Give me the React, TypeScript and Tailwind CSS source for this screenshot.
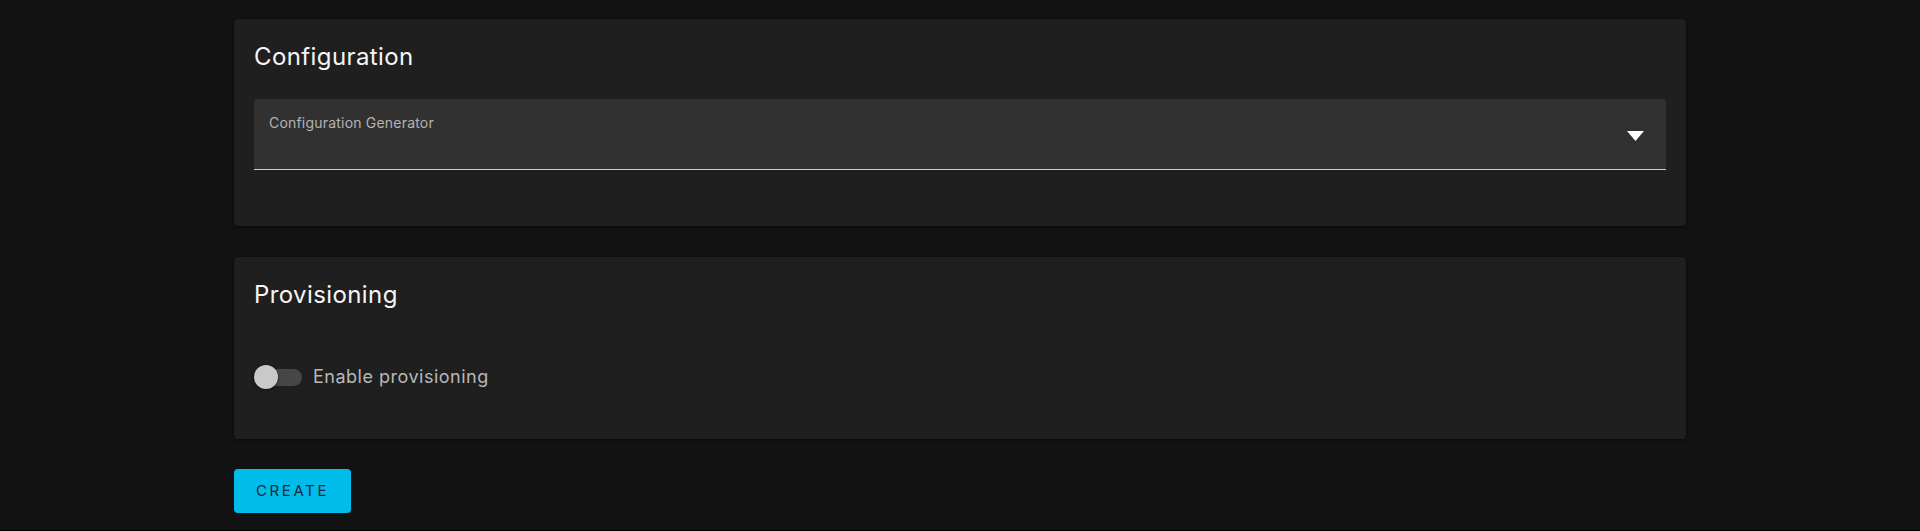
import React from "react";

export default function App() {
  return (
    <div className="w-full h-[531px] bg-black" style={{ fontFamily: "Inter, 'Noto Sans', sans-serif" }}>
      <div className="h-[530px] bg-[#121212] pt-[19px] overflow-hidden">
        <div className="w-[1452px] mx-auto flex flex-col">
          {/* Configuration card */}
          <section className="bg-[#1f1f1f] rounded-[4px] shadow-[0_1px_3px_rgba(0,0,0,0.5)] px-5 pt-[22px] pb-[56px]">
            <h2 className="text-[24px] leading-8 tracking-[0.4px] text-[#f5f5f5] font-normal">Configuration</h2>
            <div className="mt-[26px] h-[71px] bg-[#313131] rounded-t-[4px] border-b border-[#cfcfcf] flex pl-[15px] pr-[22px]">
              <div className="flex-1 pt-[14px] text-[14px] leading-5 tracking-[0.2px] text-[#b3b3b3]">Configuration Generator</div>
              <div className="self-center mt-[3px]">
                <svg width="17" height="10" viewBox="0 0 17 10">
                  <polygon points="0,0 17,0 8.5,10" fill="#ffffff" />
                </svg>
              </div>
            </div>
          </section>

          {/* Provisioning card */}
          <section className="mt-[31px] bg-[#1f1f1f] rounded-[4px] shadow-[0_1px_3px_rgba(0,0,0,0.5)] px-5 pt-[22px] pb-[48px]">
            <h2 className="text-[24px] leading-8 tracking-[0.4px] text-[#f5f5f5] font-normal">Provisioning</h2>
            <div className="mt-[52px] h-[28px] flex items-center">
              <div className="relative w-[48px] h-[24px]">
                <div className="absolute left-[2px] right-0 top-[4px] h-[17px] rounded-full bg-[#474747]" />
                <div className="absolute left-0 top-0 w-[24px] h-[24px] rounded-full bg-[#c9c9c9] shadow-[0_1px_3px_rgba(0,0,0,0.6)]" />
              </div>
              <span className="ml-[11px] text-[18px] leading-7 tracking-[0.5px] text-[#b8b8b8]">Enable provisioning</span>
            </div>
          </section>

          <div className="mt-[30px]">
            <button className="w-[117px] h-[44px] rounded-[4px] bg-[#00bceb] text-[#1c2a33] text-[15px] tracking-[2.6px] font-normal flex items-center justify-center">
              CREATE
            </button>
          </div>
        </div>
      </div>
    </div>
  );
}
